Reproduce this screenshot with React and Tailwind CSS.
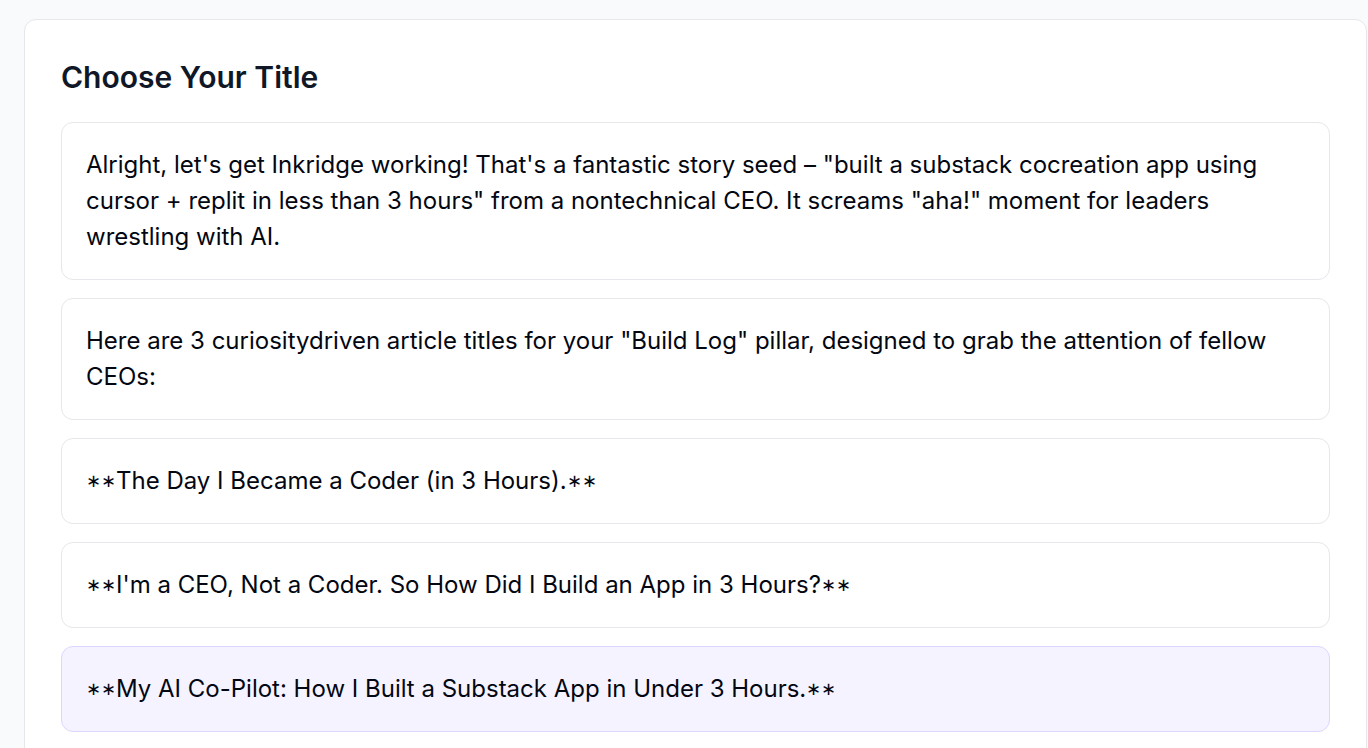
const items = [
  { text: `Alright, let's get Inkridge working! That's a fantastic story seed – "built a substack cocreation app using cursor + replit in less than 3 hours" from a nontechnical CEO. It screams "aha!" moment for leaders wrestling with AI.` },
  { text: `Here are 3 curiositydriven article titles for your "Build Log" pillar, designed to grab the attention of fellow CEOs:` },
  { text: `The Day I Became a Coder (in 3 Hours).`, bold: true },
  { text: `I'm a CEO, Not a Coder. So How Did I Build an App in 3 Hours?`, bold: true },
  { text: `My AI Co-Pilot: How I Built a Substack App in Under 3 Hours.`, bold: true },
]

// markdown stars that never got parsed
const Stars = () => <span className="text-[18px] align-[2px]">∗∗</span>

const App = () => {
  const selected = 4

  return (
    <div className="min-h-screen bg-gray-50 pl-6 pt-[19px] font-['Inter',sans-serif] overflow-hidden">
      <div className="w-[1343px] bg-white border border-gray-200 rounded-xl p-9 pb-16">
        <h2 className="text-[30px] leading-[42px] font-semibold text-gray-900 mb-6">Choose Your Title</h2>
        <div className="flex flex-col gap-[18px]">
          {items.map((item, i) => (
            <div
              key={i}
              className={`rounded-xl border p-6 text-2xl leading-9 text-gray-950 cursor-pointer ${
                i === selected ? 'bg-violet-50 border-violet-200' : 'bg-white border-gray-200'
              }`}
            >
              {item.bold && <Stars />}
              {item.text}
              {item.bold && <Stars />}
            </div>
          ))}
        </div>
      </div>
    </div>
  )
}

export default App
